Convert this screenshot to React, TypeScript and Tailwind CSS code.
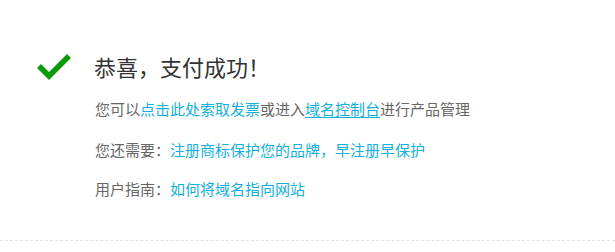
const font = {
  fontFamily: '"Microsoft YaHei", "Noto Sans CJK SC", sans-serif',
};

function CheckMark() {
  return (
    <svg width="36" height="30" viewBox="0 0 36 30" className="shrink-0">
      <path d="M3 15 L13 25 L33 5" fill="none" stroke="#0a9a0a" strokeWidth="5.5" />
    </svg>
  );
}

export default function App() {
  return (
    <div className="h-[252px] w-[615px] bg-white" style={font}>
      <div className="border-b border-dashed border-[#e2e2e2] pb-[41px] pt-[50px]">
        <div className="flex items-center gap-[22px] pl-[36px]">
          <CheckMark />
          <h1 className="text-[22px] leading-[32px] text-[#333]">恭喜，支付成功！</h1>
        </div>
        <div className="mt-[17px] pl-[95px] text-[15px] leading-[20px] text-[#666]">
          <p>
            您可以<a className="text-[#12b0dd]">点击此处索取发票</a>或进入
            <a className="text-[#12b0dd] underline underline-offset-2">域名控制台</a>
            进行产品管理
          </p>
          <p className="mt-[21px]">
            您还需要：<a className="text-[#12b0dd]">注册商标保护您的品牌，早注册早保护</a>
          </p>
          <p className="mt-[19px]">
            用户指南：<a className="text-[#12b0dd]">如何将域名指向网站</a>
          </p>
        </div>
      </div>
    </div>
  );
}
